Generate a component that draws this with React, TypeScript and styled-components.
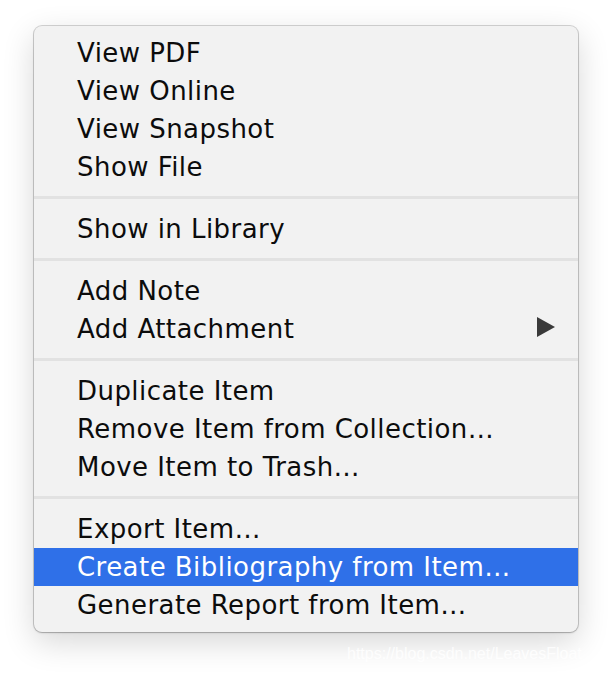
import styled, { createGlobalStyle } from 'styled-components';

const GlobalStyle = createGlobalStyle`
  html, body {
    margin: 0;
    padding: 0;
    background: #ffffff;
  }
  body {
    font-family: "DejaVu Sans", "Noto Sans", sans-serif;
  }
`;

const Page = styled.div`
  position: relative;
  width: 612px;
  height: 674px;
  padding: 26px 0 0 34px;
  box-sizing: border-box;
  overflow: hidden;
`;

const Menu = styled.ul`
  list-style: none;
  margin: 0;
  padding: 8px 0;
  width: 544px;
  box-sizing: border-box;
  background: #f2f2f2;
  border-radius: 8px;
  box-shadow:
    0 0 0 1px rgba(0, 0, 0, 0.16),
    0 1px 2px rgba(0, 0, 0, 0.18),
    0 10px 32px rgba(0, 0, 0, 0.16);
  overflow: hidden;
`;

const Item = styled.li<{ $active?: boolean }>`
  display: flex;
  align-items: center;
  justify-content: space-between;
  height: 38px;
  padding: 0 23px 0 43px;
  font-size: 26px;
  line-height: 38px;
  letter-spacing: 0.45px;
  white-space: nowrap;
  color: ${p => (p.$active ? '#ffffff' : '#0c0c0c')};
  background: ${p => (p.$active ? '#2f70e8' : 'transparent')};
`;

const Separator = styled.li`
  height: 24px;
  display: flex;
  flex-direction: column;
  justify-content: flex-start;
  padding-top: 10px;
  box-sizing: border-box;

  &::after {
    content: '';
    display: block;
    height: 3px;
    background: #e2e2e2;
  }
`;

const Arrow = styled.svg`
  width: 18px;
  height: 20px;
  margin-top: -4px;
  flex: none;
`;

const Watermark = styled.div`
  position: absolute;
  left: 347px;
  top: 645px;
  font-family: "Liberation Sans", Arial, sans-serif;
  font-size: 16px;
  color: rgba(255, 255, 255, 0.85);
  white-space: nowrap;
  pointer-events: none;
`;

type Entry = { label: string; submenu?: boolean; active?: boolean } | 'sep';

const entries: Entry[] = [
  { label: 'View PDF' },
  { label: 'View Online' },
  { label: 'View Snapshot' },
  { label: 'Show File' },
  'sep',
  { label: 'Show in Library' },
  'sep',
  { label: 'Add Note' },
  { label: 'Add Attachment', submenu: true },
  'sep',
  { label: 'Duplicate Item' },
  { label: 'Remove Item from Collection…' },
  { label: 'Move Item to Trash…' },
  'sep',
  { label: 'Export Item…' },
  { label: 'Create Bibliography from Item…', active: true },
  { label: 'Generate Report from Item…' },
];

const App = () => {
  return (
    <>
      <GlobalStyle />
      <Page>
        <Menu>
          {entries.map((entry, i) =>
            entry === 'sep' ? (
              <Separator key={i} />
            ) : (
              <Item key={i} $active={entry.active}>
                <span>{entry.label}</span>
                {entry.submenu && (
                  <Arrow viewBox="0 0 18 20">
                    <polygon points="0,0 18,10 0,20" fill="#3a3a3a" />
                  </Arrow>
                )}
              </Item>
            )
          )}
        </Menu>
        <Watermark>https://blog.csdn.net/LeavesFloat</Watermark>
      </Page>
    </>
  );
};

export default App;
